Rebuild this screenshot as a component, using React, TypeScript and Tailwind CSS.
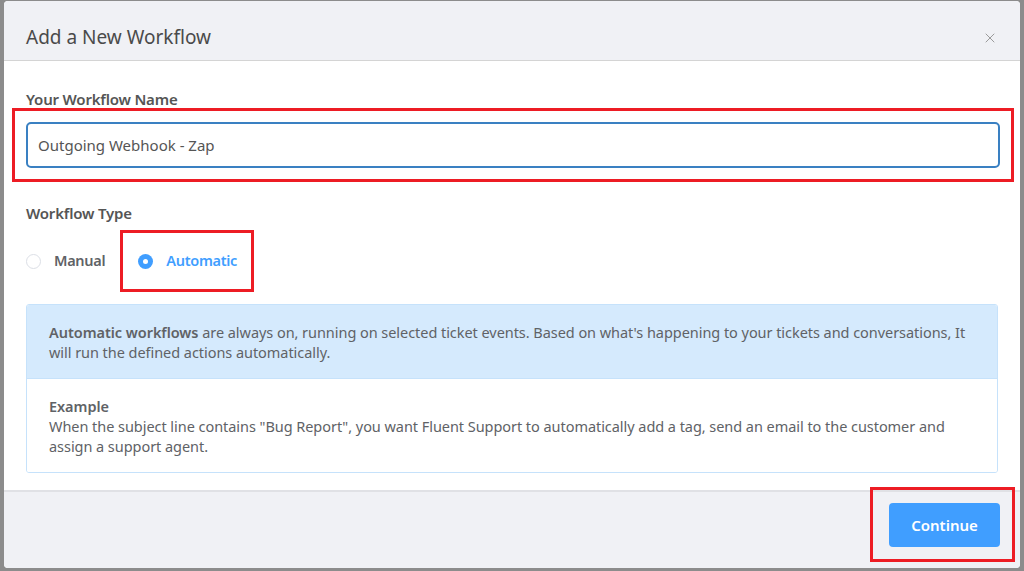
import { X } from 'lucide-react';

export default function App() {
  return (
    <div
      className="w-[1024px] h-[571px] bg-[#8c8c8c] pt-[1px] pl-[4px] pr-[4px] pb-[3px] overflow-hidden"
      style={{ fontFamily: '"Noto Sans", "Open Sans", sans-serif' }}
    >
      <div className="h-full bg-white rounded-[4px] flex flex-col overflow-hidden">
        <div className="h-[60px] shrink-0 bg-[#f0f1f5] border-b border-[#d4d4d4] flex items-center justify-between pl-[22px] pr-[22px]">
          <h2 className="text-[19px] text-[#4a4a4a] pt-[14px]">Add a New Workflow</h2>
          <button className="text-[#9a9a9a] pt-[14px]">
            <X size={16} strokeWidth={1.5} />
          </button>
        </div>

        <div className="flex-1 pl-[22px] pr-[16px] pt-[29px]">
          <label className="block text-[15px] font-semibold tracking-[-0.2px] text-[#555] leading-[18px]">Your Workflow Name</label>
          <div className="-ml-[14px] -mr-[10px] border-[3px] border-[#ed1c24] pt-[11px] pb-[11px] pl-[11px] pr-[11px] h-[74px]">
            <div className="h-[46px] border-2 border-[#3a80c2] rounded-[5px] flex items-center pl-[10px]">
              <span className="text-[15px] text-[#555]">Outgoing Webhook - Zap</span>
            </div>
          </div>

          <label className="block mt-[21px] text-[15px] font-semibold tracking-[-0.2px] text-[#555] leading-[20px]">Workflow Type</label>
          <div className="mt-[7px] flex items-center h-[62px]">
            <div className="flex items-center gap-[13px]">
              <span className="w-[15px] h-[15px] rounded-full border border-[#dcdfe6] bg-white" />
              <span className="text-[14.5px] font-semibold tracking-[-0.3px] text-[#606266]">Manual</span>
            </div>
            <div className="ml-[15px] h-[62px] border-[3px] border-[#ed1c24] flex items-center gap-[13px] pl-[15px] pr-[14px]">
              <span className="w-[15px] h-[15px] rounded-full bg-[#409eff] flex items-center justify-center">
                <span className="w-[5px] h-[5px] rounded-full bg-white" />
              </span>
              <span className="text-[14.5px] font-semibold tracking-[-0.3px] text-[#409eff]">Automatic</span>
            </div>
          </div>

          <div className="mt-[12px] w-[972px] border border-[#c6e2fb] rounded-[3px] overflow-hidden text-[14.5px] tracking-[-0.05px] text-[#606266] leading-[20px]">
            <div className="bg-[#d5eafd] border-b border-[#c6e2fb] pl-[22px] pr-[20px] pt-[17px] pb-[16px]">
              <span className="font-semibold">Automatic workflows</span> are always on, running on selected ticket events. Based on what's happening to your tickets and conversations, It will run the defined actions automatically.
            </div>
            <div className="bg-white pl-[22px] pr-[20px] pt-[17px] pb-[16px]">
              <div className="font-semibold">Example</div>
              <div>
                When the subject line contains "Bug Report", you want Fluent Support to automatically add a tag, send an email to the customer and assign a support agent.
              </div>
            </div>
          </div>
        </div>

        <div className="h-[78px] shrink-0 bg-[#f0f1f5] border-t-2 border-[#e0e1e5] relative">
          <div className="absolute right-[5px] top-[-5px] w-[145px] h-[75px] border-[3px] border-[#ed1c24] pl-[16px] pt-[13px]">
            <button className="w-[111px] h-[44px] rounded-[4px] bg-[#409eff] text-white text-[15px] font-semibold">Continue</button>
          </div>
        </div>
      </div>
    </div>
  );
}
